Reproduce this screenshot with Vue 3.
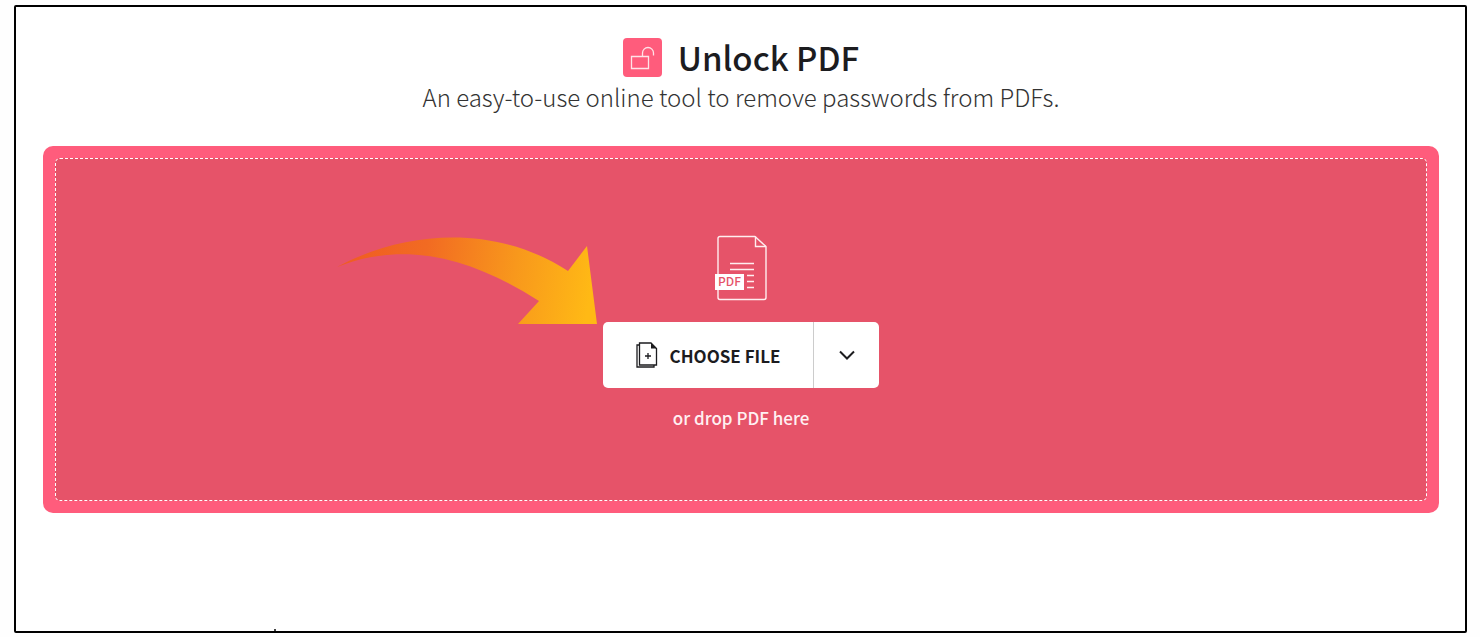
<script setup>
import { ref } from 'vue'

const fileInput = ref(null)
const chooseFile = () => fileInput.value.click()
</script>

<template>
  <main class="page">
    <header class="intro">
      <div class="heading">
        <svg class="logo" viewBox="0 0 39 39" aria-hidden="true">
          <rect width="39" height="39" rx="4" fill="#ff5c7c" />
          <path d="M8.5 18.5h17v12h-17z M19.5 18.5v-3.500a5.500 5.500 0 0 1 11 0v2.500" fill="none" stroke="#ffe3e8" stroke-width="1.3" />
        </svg>
        <h1>Unlock PDF</h1>
      </div>
      <p class="tagline">An easy-to-use online tool to remove passwords from PDFs.</p>
    </header>

    <section class="uploader">
      <div class="dropzone">
        <svg class="pdf-icon" viewBox="0 0 54 66" aria-hidden="true">
          <path d="M41 1.500H6a2 2 0 0 0-2 2v59a2 2 0 0 0 2 2h44a2 2 0 0 0 2-2V11.500z" fill="none" stroke="#ffeef0" stroke-width="1.400" stroke-linejoin="round" />
          <path d="M41.500 1.500v10H52" fill="none" stroke="#ffeef0" stroke-width="1.400" />
          <path d="M16 28.500h24M16 34.500h24M33 40.500h7M33 46.500h7M33 52.500h7" stroke="#ffeef0" stroke-width="1.300" />
          <rect x="1" y="39" width="29" height="16" fill="#fff" />
          <text x="15.500" y="51" text-anchor="middle">PDF</text>
        </svg>

        <div class="actions">
          <svg class="arrow" viewBox="0 0 260 90" aria-hidden="true">
            <defs>
              <linearGradient id="arrow-fill" gradientUnits="userSpaceOnUse" x1="0" y1="0" x2="256" y2="40">
                <stop offset="0" stop-color="#ef5a23" />
                <stop offset="0.350" stop-color="#f26b22" />
                <stop offset="0.700" stop-color="#f8981c" />
                <stop offset="1" stop-color="#ffb915" />
              </linearGradient>
            </defs>
            <path d="M0 31C72-8 163-10 231 35L250 10L260 88H181L202 65C138 24 71 3 0 31Z" fill="url(#arrow-fill)" />
          </svg>
          <button class="choose" type="button" @click="chooseFile">
            <svg class="file-icon" viewBox="0 0 22 26" aria-hidden="true">
              <path d="M3 3H1v22h17v-2" fill="none" stroke="#1c1c1f" stroke-width="1.300" />
              <path d="M3.500 1H15l5.500 5.500V23h-17z" fill="none" stroke="#1c1c1f" stroke-width="1.300" />
              <path d="M15 1v5.500h5.500z" fill="#1c1c1f" />
              <path d="M12 11v6M9 14h6" stroke="#1c1c1f" stroke-width="1.300" />
            </svg>
            <span>CHOOSE FILE</span>
          </button>
          <button class="more" type="button" aria-label="More file sources">
            <svg class="chevron" viewBox="0 0 16 10" aria-hidden="true">
              <path d="M1 1.500l7 7l7-7" fill="none" stroke="#1c1c1f" stroke-width="2" />
            </svg>
          </button>
          <input ref="fileInput" type="file" accept="application/pdf" aria-label="PDF file" hidden />
        </div>

        <p class="hint">or drop PDF here</p>
      </div>
    </section>
  </main>
</template>

<style>
body {
  background: #fefefe;
}
</style>

<style scoped>
.page {
  position: relative;
  box-sizing: border-box;
  min-height: calc(100vh - 9px);
  margin: 5px 13px 4px 14px;
  padding: 28px 26px 28px 27px;
  border: 2px solid #000;
  border-radius: 2px;
  background: #fff;
  color: #1c1c1f;
  font-family: "Noto Sans CJK SC", "Noto Sans", sans-serif;
}

.page::after {
  content: "";
  position: absolute;
  bottom: 0;
  left: 258px;
  width: 2px;
  height: 2px;
  background: #444;
}

.intro {
  text-align: center;
}

.heading {
  display: flex;
  align-items: center;
  justify-content: center;
  gap: 16px;
  height: 44px;
}

.logo {
  width: 39px;
  height: 39px;
}

h1 {
  margin: 0;
  font-size: 33px;
  font-weight: 500;
  line-height: 44px;
}

.tagline {
  margin: 0;
  color: #333;
  font-size: 24px;
  font-weight: 300;
  line-height: 36px;
}

.uploader {
  margin-top: 31px;
  padding: 12px;
  border-radius: 10px;
  background: #ff5c7c;
}

.dropzone {
  display: flex;
  flex-direction: column;
  align-items: center;
  padding: 76px 16px 68px;
  border: 1px dashed #fff;
  border-radius: 5px;
  background: #e65369;
}

.pdf-icon {
  width: 54px;
  height: 66px;
}

.pdf-icon text {
  fill: #e65369;
  font-size: 12px;
  font-weight: 500;
}

.actions {
  position: relative;
  display: flex;
  height: 66px;
  margin-top: 21px;
  border-radius: 5px;
  background: #fff;
}

.arrow {
  position: absolute;
  right: 100%;
  bottom: 62px;
  width: 260px;
  height: 90px;
  margin-right: 6px;
}

button {
  display: flex;
  align-items: center;
  justify-content: center;
  padding: 0;
  border: 0;
  background: transparent;
  color: inherit;
  font: inherit;
  cursor: pointer;
}

.choose {
  gap: 12px;
  width: 210px;
  font-size: 17px;
  font-weight: 700;
}

.file-icon {
  width: 22px;
  height: 26px;
}

.more {
  width: 66px;
  border-left: 1px solid #ccc;
}

.chevron {
  width: 16px;
  height: 10px;
}

.hint {
  margin: 16px 0 0;
  color: #fff0f2;
  font-size: 17px;
  font-weight: 500;
  line-height: 28px;
}
</style>
